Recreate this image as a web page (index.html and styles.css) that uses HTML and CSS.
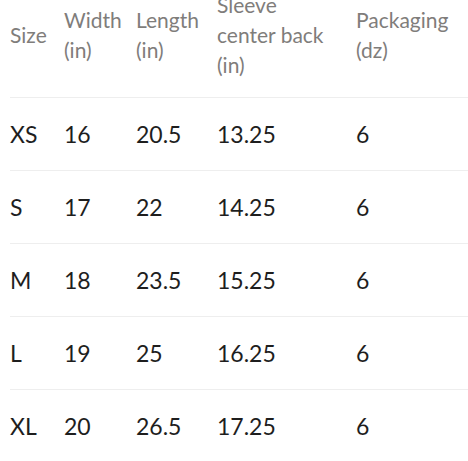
FILE: index.html
```html
<!DOCTYPE html>
<html>
<head>
<meta charset="utf-8">
<link rel="stylesheet" href="styles.css">
</head>
<body>
<table class="size-table">
  <colgroup>
    <col class="c-size"><col class="c-width"><col class="c-length"><col class="c-sleeve"><col class="c-pack">
  </colgroup>
  <thead>
    <tr>
      <th>Size</th>
      <th>Width<br>(in)</th>
      <th>Length<br>(in)</th>
      <th>Sleeve<br>center back<br>(in)</th>
      <th>Packaging<br>(dz)</th>
    </tr>
  </thead>
  <tbody>
    <tr><td>XS</td><td>16</td><td>20.5</td><td>13.25</td><td>6</td></tr>
    <tr><td>S</td><td>17</td><td>22</td><td>14.25</td><td>6</td></tr>
    <tr><td>M</td><td>18</td><td>23.5</td><td>15.25</td><td>6</td></tr>
    <tr><td>L</td><td>19</td><td>25</td><td>16.25</td><td>6</td></tr>
    <tr><td>XL</td><td>20</td><td>26.5</td><td>17.25</td><td>6</td></tr>
  </tbody>
</table>
</body>
</html>
```
FILE: styles.css
```css
html, body {
  margin: 0;
  padding: 0;
  background: #fff;
}
body {
  font-family: Lato, "Open Sans", sans-serif;
  overflow: hidden;
}
.size-table {
  border-collapse: collapse;
  margin: -27px 0 0 10px;
  width: 458px;
  table-layout: fixed;
}
.c-size { width: 54px; }
.c-width { width: 72px; }
.c-length { width: 81px; }
.c-sleeve { width: 139px; }
.c-pack { width: 112px; }
.size-table th {
  font-weight: 400;
  font-size: 21px;
  line-height: 30px;
  color: #7f7d7b;
  text-align: left;
  vertical-align: middle;
  padding: 17px 0 17px 0;
  border-bottom: 1px solid #eeeeee;
  white-space: nowrap;
}
.size-table td {
  font-size: 23px;
  line-height: 30px;
  color: #1e1e1e;
  text-align: left;
  vertical-align: middle;
  padding: 21px 0 21px 0;
  border-bottom: 1px solid #eeeeee;
}
```
